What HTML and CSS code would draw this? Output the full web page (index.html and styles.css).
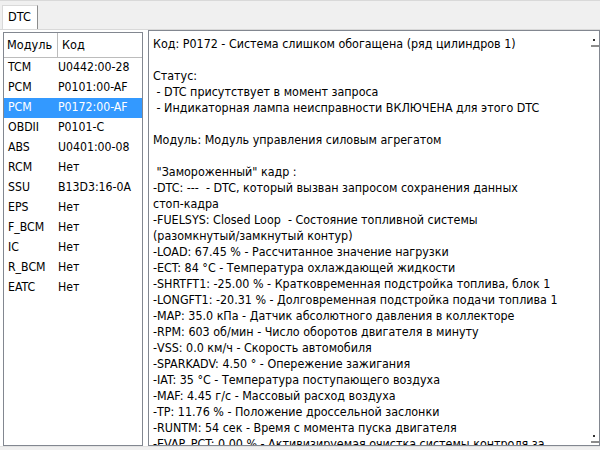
FILE: index.html
```html
<!doctype html>
<html lang="ru">

<head>
  <meta charset="UTF-8" />
  <title>DTC</title>
  <link rel="stylesheet" href="styles.css">
</head>

<body>
  <div class="tabs">
    <div class="tab">DTC</div>
  </div>
  <div class="panel">
    <div class="list">
      <div class="list-head">
        <div class="col-mod">Модуль</div>
        <div class="col-code">Код</div>
      </div>
      <div class="row"><span class="col-mod">TCM</span><span class="col-code">U0442:00-28</span></div>
      <div class="row"><span class="col-mod">PCM</span><span class="col-code">P0101:00-AF</span></div>
      <div class="row selected"><span class="col-mod">PCM</span><span class="col-code">P0172:00-AF</span></div>
      <div class="row"><span class="col-mod">OBDII</span><span class="col-code">P0101-C</span></div>
      <div class="row"><span class="col-mod">ABS</span><span class="col-code">U0401:00-08</span></div>
      <div class="row"><span class="col-mod">RCM</span><span class="col-code">Нет</span></div>
      <div class="row"><span class="col-mod">SSU</span><span class="col-code">B13D3:16-0A</span></div>
      <div class="row"><span class="col-mod">EPS</span><span class="col-code">Нет</span></div>
      <div class="row"><span class="col-mod">F_BCM</span><span class="col-code">Нет</span></div>
      <div class="row"><span class="col-mod">IC</span><span class="col-code">Нет</span></div>
      <div class="row"><span class="col-mod">R_BCM</span><span class="col-code">Нет</span></div>
      <div class="row"><span class="col-mod">EATC</span><span class="col-code">Нет</span></div>
    </div>
    <div class="details">
      <pre class="text">Код: P0172 - Система слишком обогащена (ряд цилиндров 1)

Статус:
 - DTC присутствует в момент запроса
 - Индикаторная лампа неисправности ВКЛЮЧЕНА для этого DTC

Модуль: Модуль управления силовым агрегатом

 "Замороженный" кадр :
-DTC: ---  - DTC, который вызван запросом сохранения данных
стоп-кадра
-FUELSYS: Closed Loop  - Состояние топливной системы
(разомкнутый/замкнутый контур)
-LOAD: 67.45 % - Рассчитанное значение нагрузки
-ECT: 84 °C - Температура охлаждающей жидкости
-SHRTFT1: -25.00 % - Кратковременная подстройка топлива, блок 1
-LONGFT1: -20.31 % - Долговременная подстройка подачи топлива 1
-MAP: 35.0 кПа - Датчик абсолютного давления в коллекторе
-RPM: 603 об/мин - Число оборотов двигателя в минуту
-VSS: 0.0 км/ч - Скорость автомобиля
-SPARKADV: 4.50 ° - Опережение зажигания
-IAT: 35 °C - Температура поступающего воздуха
-MAF: 4.45 г/с - Массовый расход воздуха
-TP: 11.76 % - Положение дроссельной заслонки
-RUNTM: 54 сек - Время с момента пуска двигателя
-EVAP_PCT: 0.00 % - Активизируемая очистка системы контроля за</pre>
      <div class="scrollbar">
        <div class="arrow up"></div>
        <div class="arrow down"></div>
      </div>
    </div>
  </div>
</body>

</html>
```

FILE: styles.css
```css
body {
  margin: 0;
  height: 450px;
  overflow: hidden;
  background-color: #f0f0f0;
  font-family: Tahoma, "DejaVu Sans Condensed", "Liberation Sans", sans-serif;
  font-size: 12.2px;
  color: #000;
}

.tabs {
  height: 29px;
  display: flex;
  align-items: flex-end;
  padding-left: 2px;
  border-top: 1px solid #d9d9d9;
  box-sizing: border-box;
}

.tab {
  height: 24px;
  line-height: 22px;
  padding: 0 6px 0 5px;
  font-size: 12.6px;
  background: #fff;
  border-left: 1px solid #d9d9d9;
  border-right: 1px solid #8c8c8c;
  border-top: 1px solid #d9d9d9;
  box-sizing: border-box;
}

.panel {
  display: flex;
  gap: 5px;
  height: 416px;
  padding: 0 0 0 3px;
  background: #fff;
  border-top: 1px solid #d9d9d9;
  border-bottom: 1px solid #e3e3e3;
}

.list {
  width: 138px;
  margin-top: 2px;
  border: 1px solid #828790;
  background: #fff;
  flex-shrink: 0;
}

.list-head {
  display: flex;
  height: 24px;
  line-height: 23px;
  border-bottom: 1px solid #bcbcbc;
  font-size: 12.6px;
  background: #fff;
}

.list-head .col-mod {
  width: 50px;
  padding-left: 3px;
  border-right: 1px solid #bcbcbc;
}

.list-head .col-code {
  padding-left: 4px;
}

.row {
  display: flex;
  height: 20px;
  line-height: 19px;
  padding-left: 4px;
}

.row .col-mod {
  width: 50px;
}

.row.selected {
  background: #3399ff;
  color: #fff;
}

.details {
  flex: 1;
  display: flex;
  border: 1px solid #828790;
  background: #fff;
  overflow: hidden;
}

.text {
  flex: 1;
  margin: 0;
  padding: 5px 0 0 4px;
  font-family: inherit;
  font-size: 12.4px;
  line-height: 16px;
  white-space: pre;
  overflow: hidden;
}

.scrollbar {
  width: 8px;
  display: flex;
  flex-direction: column;
  justify-content: space-between;
  padding: 8px 0 2px;
}

.arrow {
  width: 8px;
  height: 6px;
  border-bottom: 2px solid #8c8c8c;
  position: relative;
}

.arrow::before {
  content: "";
  position: absolute;
  left: 2px;
  top: 0;
  width: 2px;
  height: 2px;
  background: #333;
}
```
